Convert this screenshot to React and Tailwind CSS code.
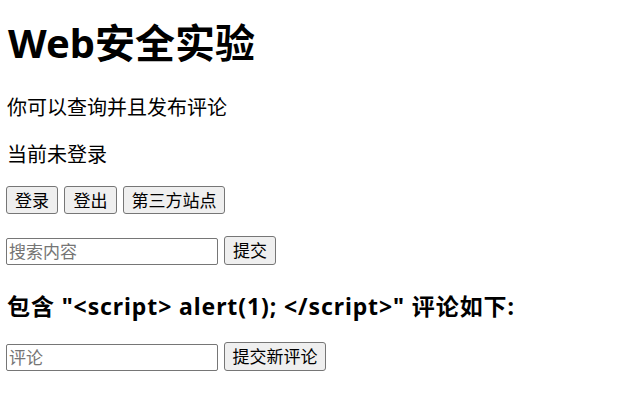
export default function App() {
  const font = { fontFamily: '"Noto Sans", "Noto Sans CJK SC", sans-serif' };
  const btn =
    "h-[28px] flex items-center justify-center rounded-[3px] border border-[#767676] bg-[#efefef] text-[17px] leading-none text-black";
  const input =
    "w-[212px] h-[27px] rounded-[2px] border border-[#767676] bg-white px-[2px] text-[17px] leading-none text-black placeholder:text-[#757575] outline-none";

  return (
    <div style={font} className="flex h-screen flex-col overflow-hidden bg-white px-[6px] text-black">
      <h1 className="mt-[21px] h-[44px] pl-[2px] text-[40px] font-bold leading-[44px]">Web安全实验</h1>

      <p className="mt-[30px] h-[26px] pl-[1px] text-[20px] leading-[26px]">你可以查询并且发布评论</p>
      <p className="mt-[21px] h-[26px] pl-[1px] text-[20px] leading-[26px]">当前未登录</p>

      <div className="mt-[18px] flex gap-[6px]">
        <button className={`${btn} w-[52px]`}>登录</button>
        <button className={`${btn} w-[53px]`}>登出</button>
        <button className={`${btn} w-[102px]`}>第三方站点</button>
      </div>

      <form className="mt-[22px] flex h-[29px] items-end gap-[6px]">
        <input className={input} placeholder="搜索内容" />
        <button type="button" className={`${btn} h-[29px] w-[52px]`}>提交</button>
      </form>

      <h3 className="mt-[29px] h-[24px] pl-[1px] text-[23px] font-bold leading-[24px] tracking-[0.9px] whitespace-nowrap">
        包含 "&lt;script&gt; alert(1); &lt;/script&gt;" 评论如下:
      </h3>

      <form className="mt-[24px] flex h-[29px] items-end gap-[6px]">
        <input className={input} placeholder="评论" />
        <button type="button" className={`${btn} h-[29px] w-[102px]`}>提交新评论</button>
      </form>
    </div>
  );
}
